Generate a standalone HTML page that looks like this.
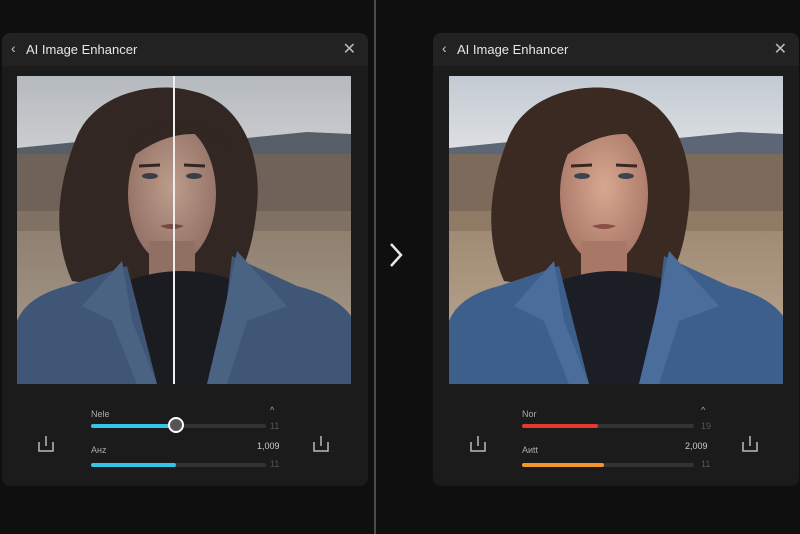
<!DOCTYPE html>
<html><head><meta charset="utf-8"><style>
*{margin:0;padding:0;box-sizing:border-box}
body{width:800px;height:534px;background:#0f0f10;position:relative;overflow:hidden;font-family:"Liberation Sans",sans-serif;color:#ddd}
.panel{position:absolute;top:33px;width:366px;height:453px;background:#1b1b1c;border-radius:8px;overflow:hidden}
.hdr{height:33px;background:#222223;position:relative}
.hdr .t{position:absolute;left:24px;top:9px;font-size:13px;color:#e6e6e6}
.hdr .b{position:absolute;left:9px;top:7px;font-size:14px;color:#ccc}
.hdr .x{position:absolute;right:12px;top:6px;font-size:16px;color:#bbb}
.photo{position:absolute;top:43px;width:334px;height:308px;overflow:hidden}
.lbl{position:absolute;font-size:9px;color:#aaa}
.track{position:absolute;height:4px;background:#333;border-radius:2px}
.fill{position:absolute;height:4px;border-radius:2px}
.ic{position:absolute}
</style></head><body>
<svg width="0" height="0" style="position:absolute">
<defs>
<linearGradient id="sky" x1="0" y1="0" x2="0" y2="1"><stop offset="0" stop-color="#c3cad2"/><stop offset="1" stop-color="#dcdfe2"/></linearGradient>
<linearGradient id="gr" x1="0" y1="0" x2="0" y2="1"><stop offset="0" stop-color="#8a7560"/><stop offset="0.5" stop-color="#a08a74"/><stop offset="1" stop-color="#bfae98"/></linearGradient>
<radialGradient id="face" cx="0.5" cy="0.45" r="0.6"><stop offset="0" stop-color="#d7a891"/><stop offset="1" stop-color="#a77464"/></radialGradient>
<symbol id="pic" viewBox="0 0 334 308">
<rect width="334" height="308" fill="url(#gr)"/>
<rect width="334" height="72" fill="url(#sky)"/>
<path d="M0 72 L60 66 L120 70 L230 62 L290 56 L334 58 L334 80 L0 82Z" fill="#5d6675"/>
<rect y="78" width="334" height="60" fill="#7c6a5b"/>
<rect y="135" width="334" height="20" fill="#8f7a66"/>
<path d="M55 205 C35 160 40 110 60 60 C80 15 140 5 175 15 C225 25 245 80 240 130 C236 170 228 195 210 215 L120 215Z" fill="#3a2a22"/>
<ellipse cx="155" cy="118" rx="44" ry="70" fill="url(#face)"/>
<rect x="132" y="165" width="46" height="45" fill="#a87766"/>
<path d="M110 75 C130 40 190 35 210 70 C190 52 150 52 110 85Z" fill="#3a2a22"/>
<ellipse cx="133" cy="100" rx="8" ry="3" fill="#3c4450"/>
<ellipse cx="177" cy="100" rx="8" ry="3" fill="#3c4450"/>
<path d="M122 90 L143 89 M167 89 L188 90" stroke="#3a2820" stroke-width="3"/>
<path d="M143 150 Q155 146 167 150 Q155 156 143 150Z" fill="#8c4d46"/>
<path d="M110 205 Q165 185 220 205 L225 308 L105 308Z" fill="#1c1e26"/>
<path d="M0 245 Q10 220 50 210 L110 190 L140 308 L0 308Z" fill="#3d5f8c"/>
<path d="M334 240 Q320 220 280 210 L215 180 L200 308 L334 308Z" fill="#3d5f8c"/>
<path d="M65 230 L105 185 L115 245 L140 308 L120 308 L95 245Z" fill="#4a6d9b"/>
<path d="M270 230 L220 175 L205 245 L190 308 L210 308 L230 245Z" fill="#4a6d9b"/>
</symbol>
</defs></svg>

<div style="position:absolute;left:374px;top:0;width:2px;height:534px;background:#4a4a4a"></div>
<svg style="position:absolute;left:387px;top:241px" width="18" height="28"><path d="M4 3 L14 14 L4 25" fill="none" stroke="#e8e8e8" stroke-width="2.5"/></svg>

<div class="panel" style="left:2px">
 <div class="hdr"><span class="b">&#x2039;</span><span class="t">AI Image Enhancer</span><span class="x">&#x2715;</span></div>
 <div class="photo" style="left:15px"><svg width="334" height="308" style="filter:saturate(0.75) brightness(0.92)"><use href="#pic"/></svg>
  <div style="position:absolute;left:156px;top:0;width:2px;height:308px;background:#eee"></div></div>
 <div class="lbl" style="left:89px;top:376px">Nele</div>
 <div class="lbl" style="left:268px;top:372px">^</div>
 <div class="track" style="left:89px;top:391px;width:175px"></div>
 <div class="fill" style="left:89px;top:391px;width:85px;background:#35c3e8"></div>
 <div style="position:absolute;left:166px;top:384px;width:16px;height:16px;border-radius:50%;background:#555;border:2.5px solid #fff"></div>
 <div class="lbl" style="left:268px;top:388px;color:#555">11</div>
 <div class="lbl" style="left:89px;top:412px">Aнz</div>
 <div class="lbl" style="left:255px;top:408px;color:#ccc">1,009</div>
 <div class="track" style="left:89px;top:430px;width:175px"></div>
 <div class="fill" style="left:89px;top:430px;width:85px;background:#35c3e8"></div>
 <div class="lbl" style="left:268px;top:426px;color:#555">11</div>
 <svg class="ic" style="left:36px;top:402px" width="16" height="18"><path d="M8 1 V11 M1 7 V16 H15 V7" fill="none" stroke="#bbb" stroke-width="1.5"/></svg>
 <svg class="ic" style="left:311px;top:402px" width="16" height="18"><path d="M8 1 V11 M1 7 V16 H15 V7" fill="none" stroke="#bbb" stroke-width="1.5"/></svg>
</div>

<div class="panel" style="left:433px">
 <div class="hdr"><span class="b">&#x2039;</span><span class="t">AI Image Enhancer</span><span class="x">&#x2715;</span></div>
 <div class="photo" style="left:16px"><svg width="334" height="308"><use href="#pic"/></svg></div>
 <div class="lbl" style="left:89px;top:376px">Nor</div>
 <div class="lbl" style="left:268px;top:372px">^</div>
 <div class="track" style="left:89px;top:391px;width:172px"></div>
 <div class="fill" style="left:89px;top:391px;width:76px;background:#e23a2e"></div>
 <div class="lbl" style="left:268px;top:388px;color:#555">19</div>
 <div class="lbl" style="left:89px;top:412px">Aиtt</div>
 <div class="lbl" style="left:252px;top:408px;color:#ccc">2,009</div>
 <div class="track" style="left:89px;top:430px;width:172px"></div>
 <div class="fill" style="left:89px;top:430px;width:82px;background:#f09530"></div>
 <div class="lbl" style="left:268px;top:426px;color:#555">11</div>
 <svg class="ic" style="left:37px;top:402px" width="16" height="18"><path d="M8 1 V11 M1 7 V16 H15 V7" fill="none" stroke="#bbb" stroke-width="1.5"/></svg>
 <svg class="ic" style="left:309px;top:402px" width="16" height="18"><path d="M8 1 V11 M1 7 V16 H15 V7" fill="none" stroke="#bbb" stroke-width="1.5"/></svg>
</div>
</body></html>
